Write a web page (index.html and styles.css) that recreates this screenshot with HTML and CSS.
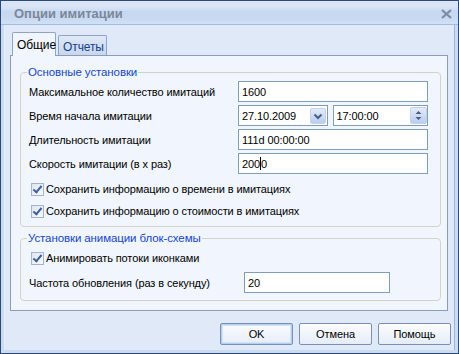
FILE: index.html
```html
<!DOCTYPE html>
<html lang="ru">
<head>
<meta charset="utf-8">
<title>Опции имитации</title>
<link rel="stylesheet" href="styles.css">
</head>
<body>
<div class="window">
  <div class="titlebar">
    <span class="title">Опции имитации</span>
    <svg class="close" width="11" height="10" viewBox="0 0 11 10"><path d="M1 1 L10 9 M10 1 L1 9" stroke="#7d8ba3" stroke-width="2.2" fill="none"/></svg>
  </div>
  <div class="client">
    <div class="tabs">
      <div class="tab active">Общие</div>
      <div class="tab">Отчеты</div>
    </div>
    <div class="panel">
      <div class="group g1">
        <div class="legend">Основные установки</div>
        <div class="grid">
          <div class="lbl">Максимальное количество имитаций</div>
          <div class="field">1600</div>
          <div class="lbl">Время начала имитации</div>
          <div class="pair">
            <div class="field date"><span class="val">27.10.2009</span>
              <span class="btn-dd"><svg width="16" height="16" viewBox="0 0 16 16"><path d="M4.5 6.5 L8 10 L11.5 6.5" stroke="#4a5f86" stroke-width="2" fill="none"/></svg></span>
            </div>
            <div class="field time"><span class="val">17:00:00</span>
              <span class="btn-spin"><svg width="17" height="17" viewBox="0 0 17 17"><path d="M5.5 7 L8.5 4 L11.5 7 Z M5.5 10 L8.5 13 L11.5 10 Z" fill="#4a5f86"/></svg></span>
            </div>
          </div>
          <div class="lbl">Длительность имитации</div>
          <div class="field">111d 00:00:00</div>
          <div class="lbl">Скорость имитации (в х раз)</div>
          <div class="field">200<span class="caret"></span>0</div>
        </div>
        <div class="checks">
          <div class="check"><span class="cb"></span>Сохранить информацию о времени в имитациях</div>
          <div class="check"><span class="cb"></span>Сохранить информацию о стоимости в имитациях</div>
        </div>
      </div>
      <div class="group g2">
        <div class="legend">Установки анимации блок-схемы</div>
        <div class="checks2">
          <div class="check"><span class="cb"></span>Анимировать потоки иконками</div>
        </div>
        <div class="freq">
          <div class="lbl">Частота обновления (раз в секунду)</div>
          <div class="field small">20</div>
        </div>
      </div>
    </div>
    <div class="footer">
      <div class="button default">OK</div>
      <div class="button">Отмена</div>
      <div class="button">Помощь</div>
    </div>
  </div>
</div>
</body>
</html>
```

FILE: styles.css
```css
* { box-sizing: border-box; }
html, body { margin: 0; padding: 0; }
body {
  font-family: "Liberation Sans", Arial, sans-serif;
  font-size: 11px;
  letter-spacing: -0.1px;
  color: #000;
  background: #fff;
}
.window {
  width: 459px;
  height: 354px;
  border: 1px solid #2c4a78;
  display: flex;
  flex-direction: column;
  background: #dfe9f8;
}
.titlebar {
  height: 24px;
  flex: none;
  border-bottom: 1px solid #9dbde6;
  background: linear-gradient(#dbe6f6 0, #d7e3f5 30%, #c6d8f1 45%, #c8d9f1 75%, #d2e0f4 100%);
  display: flex;
  align-items: center;
  justify-content: space-between;
  padding: 0 6px 0 13px;
}
.title {
  font-weight: bold;
  font-size: 13px;
  letter-spacing: 0;
  color: #7b8799;
  margin-top: 2px;
}
.close { margin-top: 2px; }
.client {
  flex: 1;
  border-left: 3px solid #cbdcf2;
  border-right: 3px solid #cbdcf2;
  border-bottom: 3px solid #cbdcf2;
  box-shadow: inset 1px 0 0 #e6eefa, inset -1px 0 0 #9bb6da;
  padding: 7px 0 0 6px;
  display: flex;
  flex-direction: column;
}
.tabs {
  display: flex;
  align-items: flex-end;
  gap: 2px;
  padding-left: 2px;
}
.tab {
  height: 20px;
  padding: 2px 0 0 4px;
  border: 1px solid #8fa5c6;
  border-bottom: none;
  border-radius: 2px 2px 0 0;
  background: linear-gradient(#dfe8f6, #c7d7ef);
  color: #15428b;
  display: flex;
  align-items: center;
  width: 49px;
  font-size: 12px;
}
.tab.active {
  position: relative;
  height: 24px;
  margin-bottom: -1px;
  width: 44px;
  background: #f1f5fd;
  color: #000;
  border-color: #8fa5c6;
  padding-top: 0;
  padding-left: 4px;
}
.panel {
  margin-right: 7px;
  height: 256px;
  border: 1px solid #8a9cb8;
  background: #f1f5fd;
  padding: 0 6px 0 9px;
}
.group {
  border: 1px solid #d4d4c4;
  border-radius: 4px;
  padding: 0 0 0 8px;
}
.g1 { margin-top: 16px; padding-bottom: 4px; }
.g2 { margin-top: 11px; padding-bottom: 7px; }
.legend {
  display: block;
  width: max-content;
  margin: -8px 0 0 -2px;
  padding: 0 1px;
  height: 14px;
  line-height: 14px;
  background: #f1f5fd;
  color: #1446d0;
  font-size: 11.5px;
}
.grid {
  display: grid;
  grid-template-columns: 209px 190px;
  grid-auto-rows: 21px;
  row-gap: 3px;
  margin-top: 2px;
  align-items: center;
}
.lbl { white-space: nowrap; }
.field {
  height: 21px;
  border: 1px solid #7f9db9;
  background: #fff;
  padding-left: 3px;
  display: flex;
  align-items: center;
  white-space: nowrap;
}
.pair {
  display: flex;
  gap: 5px;
  height: 21px;
}
.field.date { width: 90px; justify-content: space-between; padding-right: 1px; }
.field.time { width: 96px; justify-content: space-between; padding-right: 0; }
.btn-dd {
  width: 16px; height: 16px;
  border: 1px solid #c3d3eb;
  border-radius: 2px;
  background: linear-gradient(#e2ebf9, #b9cdee);
  display: flex;
}
.btn-spin {
  width: 17px; height: 17px;
  border: 1px solid #c3d3eb;
  border-radius: 2px;
  background: linear-gradient(#e2ebf9, #b9cdee);
  display: flex;
}
.btn-dd svg, .btn-spin svg { margin: -1px; }
.caret {
  display: inline-block;
  width: 1px;
  height: 13px;
  background: #000;
}
.checks { margin-top: 4px; }
.check {
  height: 22px;
  display: flex;
  align-items: center;
  padding-left: 2px;
  white-space: nowrap;
}
.cb {
  width: 13px;
  height: 13px;
  border: 1px solid #a5b4cb;
  background: linear-gradient(135deg, #dfe6f1, #f7f9fc);
  margin-right: 2px;
  position: relative;
  flex: none;
}
.cb::after {
  content: "";
  position: absolute;
  left: 3px;
  top: 0;
  width: 3px;
  height: 7px;
  border: solid #3f5f9e;
  border-width: 0 2px 2px 0;
  transform: rotate(40deg);
}
.checks2 { margin-top: 2px; }
.freq {
  display: flex;
  align-items: center;
  margin-top: 3px;
}
.freq .lbl { width: 215px; }
.field.small { width: 146px; }
.footer {
  display: flex;
  justify-content: flex-end;
  gap: 6px;
  margin-top: 12px;
  margin-right: 4px;
}
.button {
  width: 73px;
  height: 22px;
  border: 1px solid #7a8fb2;
  border-radius: 2px;
  background: linear-gradient(#fbfcfe, #e6edf8);
  display: flex;
  align-items: center;
  justify-content: center;
}
.button.default {
  box-shadow: inset 0 0 0 1px #b3cff2, inset 0 0 0 2px #d4e4f8;
}
```
